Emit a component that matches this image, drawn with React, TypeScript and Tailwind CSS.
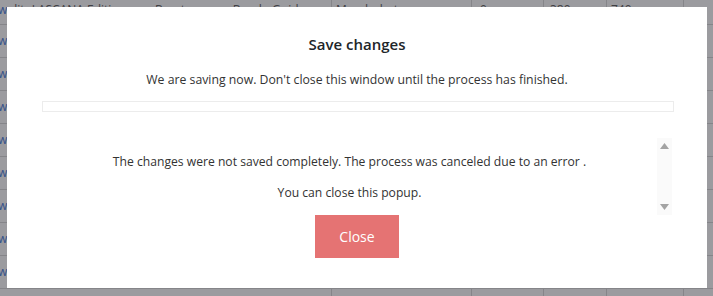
import React from "react";

const rows = Array.from({ length: 10 });

function BackgroundTable() {
  return (
    <div className="-mt-[8px] flex flex-col">
      {rows.map((_, i) => (
        <div
          key={i}
          className={`grid h-[33px] grid-cols-[332px_140px_72px_63px_77px_29px] border-b border-[#858589] text-[12px] text-[#3f3f44] ${
            i === 0 ? "pt-[4px]" : ""
          }`}
        >
          <div className="flex items-center gap-[7px] overflow-hidden whitespace-nowrap border-r border-[#858589]">
            {i < 9 && <span className="-ml-[2px] text-[#34508a]">w</span>}
            {i === 0 && (
              <>
                <span>lit</span>
                <span>LASCANA Edition</span>
                <span className="ml-[22px]">Bruste</span>
                <span className="ml-[34px]">Bando Guide</span>
              </>
            )}
          </div>
          <div className="flex items-center overflow-hidden whitespace-nowrap border-r border-[#858589] pl-[4px]">
            {i === 0 && "Mandschatern"}
          </div>
          <div className="flex items-center border-r border-[#858589] pl-[8px]">
            {i === 0 && "0"}
          </div>
          <div className="flex items-center border-r border-[#858589] pl-[6px]">
            {i === 0 && "380"}
          </div>
          <div className="flex items-center border-r border-[#858589] pl-[4px]">
            {i === 0 && "740"}
          </div>
          <div />
        </div>
      ))}
    </div>
  );
}

function FakeScrollbar() {
  return (
    <div className="flex w-[15px] flex-col items-center justify-between bg-[#fafafa] py-[5px]">
      <svg width="9" height="6" viewBox="0 0 9 6">
        <polygon points="4.5,0 9,6 0,6" fill="#a3a3a3" />
      </svg>
      <svg width="9" height="6" viewBox="0 0 9 6">
        <polygon points="0,0 9,0 4.5,6" fill="#a3a3a3" />
      </svg>
    </div>
  );
}

export default function App() {
  return (
    <div
      className="relative h-[296px] w-[713px] overflow-hidden bg-[#9b9b9f]"
      style={{ fontFamily: '"Open Sans", "Noto Sans", sans-serif' }}
    >
      <BackgroundTable />

      <div className="absolute left-[7px] top-[7px] flex h-[281px] w-[700px] flex-col items-center bg-white pt-[27px]">
        <h2 className="text-[15px] font-semibold leading-[20px] text-[#212529]">
          Save changes
        </h2>
        <p className="mt-[17px] text-[12.25px] leading-[18px] text-[#333]">
          We are saving now. Don't close this window until the process has
          finished.
        </p>
        <div className="ml-[1px] mt-[12px] h-[11px] w-[632px] border border-[#ececec] bg-white" />

        <div className="mt-[26px] flex h-[77px] w-[630px]">
          <div className="flex flex-1 flex-col items-center pt-[15px] text-[12.15px] leading-[18px] text-[#333]">
            <p>
              The changes were not saved completely. The process was canceled
              due to an error .
            </p>
            <p className="mt-[13px]">You can close this popup.</p>
          </div>
          <FakeScrollbar />
        </div>

        <button className="h-[43px] w-[84px] bg-[#e57373] text-[14px] text-white">
          Close
        </button>
      </div>
    </div>
  );
}
